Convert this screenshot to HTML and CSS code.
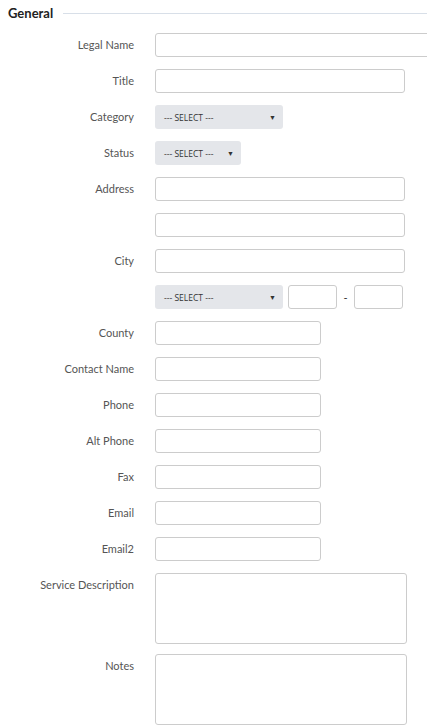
FILE: index.html
```html
<!DOCTYPE html>
<html>
<head>
<meta charset="utf-8">
<link rel="stylesheet" href="styles.css">
</head>
<body>
<div class="section">
  <div class="legend"><span class="legend-text">General</span><span class="legend-line"></span></div>
  <div class="form">
    <label class="lbl">Legal Name</label><div class="fld"><input class="inp w-full"></div>
    <label class="lbl">Title</label><div class="fld"><input class="inp w-lg"></div>
    <label class="lbl">Category</label><div class="fld"><div class="sel w-sel-lg"><span>--- SELECT ---</span><span class="arr">▼</span></div></div>
    <label class="lbl">Status</label><div class="fld"><div class="sel w-sel-sm"><span>--- SELECT ---</span><span class="arr">▼</span></div></div>
    <label class="lbl">Address</label><div class="fld"><input class="inp w-lg"></div>
    <label class="lbl"></label><div class="fld"><input class="inp w-lg"></div>
    <label class="lbl">City</label><div class="fld"><input class="inp w-lg"></div>
    <label class="lbl"></label><div class="fld zip-row"><div class="sel w-sel-lg"><span>--- SELECT ---</span><span class="arr">▼</span></div><input class="inp w-zip"><span class="dash">-</span><input class="inp w-zip"></div>
    <label class="lbl">County</label><div class="fld"><input class="inp w-md"></div>
    <label class="lbl">Contact Name</label><div class="fld"><input class="inp w-md"></div>
    <label class="lbl">Phone</label><div class="fld"><input class="inp w-md"></div>
    <label class="lbl">Alt Phone</label><div class="fld"><input class="inp w-md"></div>
    <label class="lbl">Fax</label><div class="fld"><input class="inp w-md"></div>
    <label class="lbl">Email</label><div class="fld"><input class="inp w-md"></div>
    <label class="lbl">Email2</label><div class="fld"><input class="inp w-md"></div>
    <label class="lbl top">Service Description</label><div class="fld tall first"><textarea class="ta"></textarea></div>
    <label class="lbl top">Notes</label><div class="fld tall"><textarea class="ta"></textarea></div>
  </div>
</div>
</body>
</html>
```
FILE: styles.css
```css
html, body { margin: 0; padding: 0; overflow: hidden; background: #fff; }
body { font-family: "Lato", "Open Sans", sans-serif; color: #555; width: 427px; }
.section { padding: 5px 0 0 8px; }
.legend { display: flex; align-items: center; gap: 10px; height: 16px; }
.legend-text { font-size: 13px; font-weight: 700; color: #222; }
.legend-line { flex: 1; height: 1px; background: #d8dfe8; }
.form { display: grid; grid-template-columns: 127px auto; column-gap: 20px; row-gap: 12px; margin-top: 12px; }
.lbl { font-size: 11px; text-align: right; line-height: 24px; color: #555; white-space: nowrap; padding-right: 1px; }
.fld { display: flex; align-items: center; height: 24px; }
.fld.tall { height: auto; align-items: flex-start; }
.fld.first { margin-bottom: -2px; }
.inp { box-sizing: border-box; height: 24px; border: 1px solid #ccc; border-radius: 3px; padding: 0 6px; background: #fff; margin: 0; font: inherit; }
.w-full { width: 290px; }
.w-lg { width: 250px; }
.w-md { width: 166px; }
.w-zip { width: 49px; }
.sel { box-sizing: border-box; height: 24px; background: #e4e6ea; border-radius: 3px; display: flex; align-items: center; justify-content: space-between; padding: 0 7px 0 9px; font-size: 8.5px; color: #333; font-family: "Open Sans", sans-serif; }
.sel .arr { font-size: 7px; color: #333; }
.w-sel-lg { width: 128px; }
.w-sel-sm { width: 86px; }
.zip-row .sel { margin-right: 5px; }
.dash { width: 17px; text-align: center; font-size: 11px; color: #333; }
.ta { box-sizing: border-box; width: 252px; height: 71px; border: 1px solid #ccc; border-radius: 3px; margin: 0; resize: none; font: inherit; display: block; }
```
